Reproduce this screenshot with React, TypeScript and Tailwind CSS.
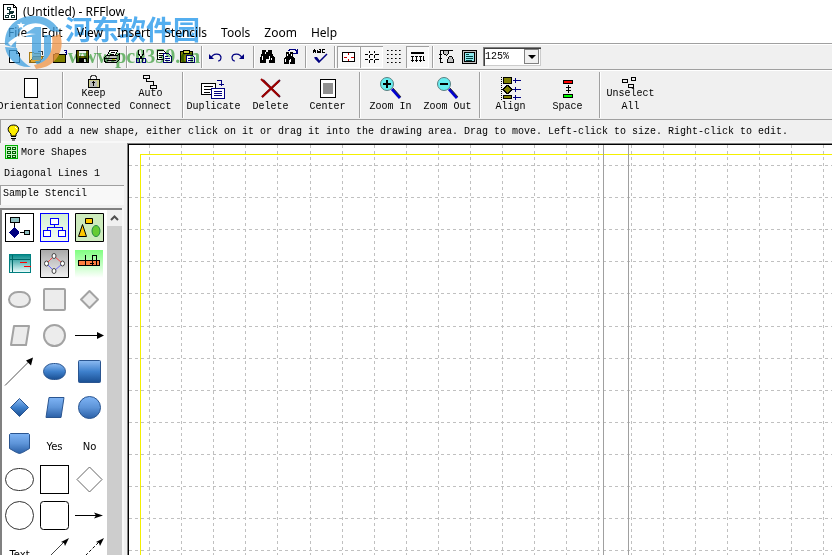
import React from "react";

type IconProps = { children: React.ReactNode; w?: number; h?: number; crisp?: boolean };

function Icon({ children, w = 23, h = 22, crisp = true }: IconProps) {
  return (
    <svg
      width={w}
      height={h}
      viewBox={`0 0 ${w} ${h}`}
      fill="none"
      stroke="#000"
      shapeRendering={crisp ? "crispEdges" : "auto"}
      className="block shrink-0"
      aria-hidden="true"
    >
      {children}
    </svg>
  );
}

function Sep({ tall = false }: { tall?: boolean }) {
  return (
    <div className="w-[6px] shrink-0 pl-[3px]">
      <div className={`w-[2px] border-l border-[#a0a0a0] bg-white ${tall ? "h-[46px]" : "h-[22px]"}`} />
    </div>
  );
}

function Tool({ label, pressed = false, children }: { label: string; pressed?: boolean; children: React.ReactNode }) {
  return (
    <button
      aria-label={label}
      aria-pressed={pressed}
      className={
        pressed
          ? "h-[22px] w-[23px] shrink-0 overflow-hidden bg-[#f8f8f8] shadow-[inset_1px_1px_0_#a0a0a0,inset_-1px_-1px_0_#fff]"
          : "h-[22px] w-[23px] shrink-0 overflow-hidden"
      }
    >
      <Icon>{children}</Icon>
    </button>
  );
}

function BigTool({ lines, children }: { lines: string[]; children: React.ReactNode }) {
  return (
    <button className="grid h-[46px] w-[57px] shrink-0 justify-center">
      <span className="col-start-1 row-start-1 flex justify-center">
        <Icon w={40} h={30}>
          {children}
        </Icon>
      </span>
      <span className="col-start-1 row-start-1 flex flex-col self-end pb-[5px] text-center whitespace-pre leading-[13px]">
        {lines.map((l) => (
          <span key={l}>{l}</span>
        ))}
      </span>
    </button>
  );
}

function Binoculars() {
  return (
    <>
      <path d="M8 5h3v2h1v-2h3v4l2 3v5h-5v-4h-1v4h-5v-5l2 -3z" fill="#000" stroke="none" />
      <path d="M7.500 12v3M12.500 12v3M9.500 7v2M13.500 7v2" stroke="#fff" />
    </>
  );
}

function StandardBar() {
  return (
    <div role="toolbar" aria-label="Standard" className="flex h-[26px] items-center border-t border-[#a0a0a0] pl-[2px] shadow-[inset_0_1px_0_#fff]">
      <Tool label="New">
        <path d="M7.500 4.500h7l3 3v9h-10zM14.500 4.500v3h3" fill="#fff" />
      </Tool>
      <Tool label="Open">
        <path d="M4.500 16.500v-10h4l1 1h6v3" fill="#ffe9a0" stroke="#a87b16" />
        <path d="M4.500 16.500l4-6h10l-4 6z" fill="#e3a72f" stroke="#8a6612" />
        <path d="M13 5.500h4v3" stroke="#333" />
      </Tool>
      <Tool label="Open folder">
        <path d="M5.500 16.500v-8h1l1-1h3l1 1h6v8z" fill="#808000" />
        <path d="M18.500 9v-4M16 4.500h3M17 6.500h1" stroke="#000080" />
      </Tool>
      <Tool label="Save">
        <path d="M5.500 4.500h12v12h-12z" fill="#606000" />
        <path d="M8 5h7v5h-7z" fill="#f0f0f0" stroke="none" />
        <path d="M8 12h8v5h-8z" fill="#000" stroke="none" />
        <path d="M13 13h2v3h-2z" fill="#ddd" stroke="none" />
      </Tool>
      <Sep />
      <Tool label="Print">
        <path d="M7.500 9.500l2-5h8l-2 5" fill="#fff" />
        <path d="M4.500 15.500v-4l2-2h11l2-2v6l-3 3h-10z" fill="#c0c0c0" />
        <path d="M5 12.500h12M7 14.500h9M11 6.500h4M10 8.500h4" />
        <path d="M12 13.500h3" stroke="#cc0" />
      </Tool>
      <Sep />
      <Tool label="Cut">
        <path d="M9.500 4v4l4 5M14.500 4v4l-4 5" />
        <path d="M7.500 12.500h3v4h-3zM13.500 12.500h3v4h-3z" stroke="#000080" />
      </Tool>
      <Tool label="Copy">
        <path d="M5.500 4.500h6l2 2v7h-8z" fill="#fff" />
        <path d="M7 7.500h4M7 9.500h4M7 11.500h3" />
        <path d="M11.500 7.500h5l3 3v6h-8z" fill="#fff" stroke="#000080" />
        <path d="M13 10.500h3M13 12.500h5M13 14.500h5" stroke="#000080" />
      </Tool>
      <Tool label="Paste">
        <path d="M5.500 5.500h12v11h-12z" fill="#808000" />
        <path d="M8.500 4.500h6v3h-6z" fill="#d8d840" />
        <path d="M11.500 9.500h6l2 2v5h-8z" fill="#fff" stroke="#000080" />
        <path d="M13 12.500h5M13 14.500h5" stroke="#000080" />
      </Tool>
      <Sep />
      <Tool label="Undo">
        <g shapeRendering="auto">
          <path d="M7 12c2-5 9-5 10-1c0 3-1 4-3 4" stroke="#000080" strokeWidth="1.200" />
          <path d="M5 8v5h5z" fill="#000080" stroke="none" />
        </g>
      </Tool>
      <Tool label="Redo">
        <g shapeRendering="auto">
          <path d="M15 12c-2-5-9-5-10-1c0 3 1 4 3 4" stroke="#000080" strokeWidth="1.200" />
          <path d="M17 8v5h-5z" fill="#000080" stroke="none" />
        </g>
      </Tool>
      <Sep />
      <Tool label="Find">
        <path d="M6 4h4v2h2v-2h4v3l3 5v5h-6v-4h-3v4h-6v-5l2-5z" fill="#000" stroke="none" />
        <path d="M6.500 10v4M13.500 10v4M9.500 6v2M15.500 12v2" stroke="#fff" />
      </Tool>
      <Tool label="Find next">
        <g transform="translate(-1 1)">
          <Binoculars />
        </g>
        <path d="M9.500 5l2-2h4l2 2v3M14 7.500h4M18.500 3v5" stroke="#000080" />
      </Tool>
      <Sep />
      <Tool label="Spelling">
        <path d="M5.500 7v-2l1-1l1 1v2M6 5.500h2M10.500 3.500h2v3h-3v-3M10 5.500h2M17 3.500h-2l-1 1v1l1 1h2" />
        <g shapeRendering="auto">
          <path d="M7 12l4 4l8-8" stroke="#000080" strokeWidth="1.500" />
          <path d="M6 11l3 0l3 4l-1 2z" fill="#000080" stroke="none" />
        </g>
      </Tool>
      <Sep />
      <Tool label="Page center" pressed>
        <path d="M5.500 6.500h12v9h-12z" fill="#fff" />
        <path d="M11.500 7v2M11.500 13v2M7 11.500h3M14 11.500h3" stroke="#d00000" />
      </Tool>
      <Tool label="Snap" pressed>
        <path d="M9.500 5v2M9.500 9v3M9.500 14v3M14.500 5v2M14.500 9v3M14.500 14v3M5 8.500h3M10 8.500h3M15 8.500h4M5 13.500h3M10 13.500h3M15 13.500h4" />
      </Tool>
      <Tool label="Dots">
        <path d="M4 4.500h15M4 8.500h15M4 12.500h15M4 16.500h15" strokeDasharray="1 3" />
        <path d="M5 4.500h15M5 8.500h15M5 12.500h15M5 16.500h15" strokeDasharray="1 3" stroke="#606060" />
      </Tool>
      <Tool label="Rulers" pressed>
        <path d="M5 7h13" strokeWidth="2" />
        <path d="M5 10.500h13M6.500 11v3M10.500 11v3M14.500 11v3M17.500 11v3M5 14.500h14" strokeDasharray="3 1" />
        <path d="M6.500 14v2M10.500 14v2M14.500 14v2" />
      </Tool>
      <Sep />
      <Tool label="Edit points">
        <path d="M18 4.500h-13v12h3M4 8.500h3M4 12.500h3" />
        <path d="M8.500 4.500h5v3l-2 2l-3-2z" fill="#c0c0c0" />
        <path d="M12.500 16.500v-3l2-3h2l2 3v3z" fill="#c0c0c0" />
      </Tool>
      <Tool label="Properties">
        <path d="M4.500 4.500h14v13h-14z" fill="#c0c0c0" />
        <path d="M6.500 6.500h10v9h-10z" fill="#8fe9ee" />
        <path d="M8 8.500h3M8 10.500h7M8 12.500h7M8 14.500h6" stroke="#004040" />
      </Tool>
      <div className="relative ml-[2px] h-[19px] w-[58px] shrink-0 bg-white shadow-[inset_1px_1px_0_#808080,inset_2px_2px_0_#404040,inset_-1px_-1px_0_#ccc]">
        <select aria-label="Zoom level" className="h-full w-full appearance-none bg-transparent pl-[2px] text-[10px] outline-none">
          <option>125%</option>
          <option>100%</option>
        </select>
        <div className="pointer-events-none absolute top-[2px] right-[2px] flex h-[15px] w-[15px] items-center justify-center border border-[#808080] bg-[#f0f0f0]">
          <div className="border-x-[4px] border-t-[4px] border-x-transparent border-t-black" />
        </div>
      </div>
    </div>
  );
}

function Lens({ plus = false }: { plus?: boolean }) {
  return (
    <g shapeRendering="auto">
      <path d="M22 17l8 9" stroke="#0000d0" strokeWidth="3" />
      <path d="M23 16l8 9" stroke="#333" />
      <circle cx="17" cy="12" r="6.500" fill="#66edf0" stroke="#5a7f80" />
      <path d={plus ? "M13 12h8M17 8v8" : "M13 12h8"} strokeWidth="2" />
    </g>
  );
}

function ActionBar() {
  return (
    <div role="toolbar" aria-label="Actions" className="flex h-[50px] items-center border-t border-[#a0a0a0] pl-[2px] shadow-[inset_0_1px_0_#fff]">
      <BigTool lines={["Orientation"]}>
        <path d="M13.500 6.500h13v19h-13z" fill="#fff" />
      </BigTool>
      <Sep tall />
      <BigTool lines={["Keep", "Connected"]}>
        <path d="M17.500 7v-2l2-2h2l2 2v2" stroke="#444" />
        <path d="M15.500 7.500h11v8h-11z" fill="#c9c98a" />
        <path d="M17 9h7v6h-7z" fill="#bbb" stroke="none" />
        <path d="M20.500 9v5M19 10.500h3" />
      </BigTool>
      <BigTool lines={["Auto", "Connect"]}>
        <path d="M13.500 3.500h6v3h-6zM16.500 7v2h7v4M20.500 13.500h6v3h-6z" />
      </BigTool>
      <Sep tall />
      <BigTool lines={["Duplicate"]}>
        <path d="M8.500 11.500h14v11h-14z" fill="#fff" />
        <path d="M11 14.500h9M11 17.500h7M11 20.500h6" />
        <path d="M18.500 16.500h13v10h-13z" fill="#fff" stroke="#000080" />
        <path d="M21 19.500h8M21 21.500h8M21 23.500h8M24 8.500h4v5M26 12.500h5" stroke="#000080" />
      </BigTool>
      <BigTool lines={["Delete"]}>
        <g shapeRendering="auto">
          <path d="M12 8l17 17M29 8l-18 17" stroke="#4b1232" strokeWidth="2" />
          <path d="M10 7l18 17M28 9l-17 16" stroke="#9d0000" strokeWidth="2" />
        </g>
      </BigTool>
      <BigTool lines={["Center"]}>
        <path d="M12.500 7.500h15v18h-15z" fill="#fff" />
        <path d="M15 11h10v11h-10z" fill="#909090" stroke="none" />
      </BigTool>
      <Sep tall />
      <BigTool lines={["Zoom In"]}>
        <Lens plus />
      </BigTool>
      <BigTool lines={["Zoom Out"]}>
        <Lens />
      </BigTool>
      <Sep tall />
      <BigTool lines={["Align"]}>
        <path d="M10.500 5v24" strokeDasharray="1 1" />
        <path d="M12.500 5.500h8v6h-8zM12.500 23.500h8v3h-8zM12 17.500l4-4h1l4 4l-4 4h-1z" fill="#808000" />
        <path d="M22 8.500h8M22 17.500h8M22 25.500h8M24.500 6v5M24.500 15v5M24.500 23v5" stroke="#000080" />
      </BigTool>
      <BigTool lines={["Space"]}>
        <path d="M15.500 8.500h9v3h-9z" fill="#f00" />
        <path d="M15.500 22.500h9v3h-9z" fill="#0f0" />
        <path d="M20.500 13v8M18 15.500h5M18 18.500h5" />
      </BigTool>
      <Sep tall />
      <BigTool lines={["Unselect", "All"]}>
        <path d="M12.500 7.500h5v3h-5zM18.500 12.500h5v3h-5zM21.500 5.500h4v3h-4z" />
      </BigTool>
    </div>
  );
}

function Arrow({ d, head, dash, stroke }: { d: string; head: string; dash?: string; stroke?: string }) {
  return (
    <>
      <path d={d} strokeDasharray={dash} stroke={stroke} />
      <path d={head} fill="#000" stroke="none" />
    </>
  );
}

const GREY = { fill: "#ececec", stroke: "#a3a3a3", strokeWidth: 2 };
const BLUE = { fill: "url(#blue)", stroke: "#2a5590", strokeWidth: 1 };
const SKY = { fill: "url(#sky)", stroke: "#2a5590", strokeWidth: 1 };

const shapes: { name: string; art: React.ReactNode }[] = [
  {
    name: "Flowchart",
    art: (
      <g shapeRendering="crispEdges">
        <path d="M3.500 3.500h28v28h-28z" fill="#fff" />
        <path d="M12.500 12v9M18 22.500h6" />
        <path d="M8.500 7.500h9v5h-9zM22.500 20.500h5v4h-5z" fill="#8fc0c0" />
        <path d="M12.500 17l5 5.500l-5 5.500l-5-5.500z" fill="#000080" stroke="none" />
      </g>
    ),
  },
  {
    name: "Organization chart",
    art: (
      <g shapeRendering="crispEdges">
        <path d="M3.500 3.500h28v28h-28z" fill="url(#mint)" stroke="#00f" />
        <path d="M13.500 8.500h8v6h-8zM6.500 20.500h7v6h-7zM21.500 20.500h7v6h-7z" fill="#fff" stroke="#00f" />
        <path d="M17.500 15v2M10.500 20v-3h15v3" stroke="#00f" />
      </g>
    ),
  },
  {
    name: "Basic shapes",
    art: (
      <>
        <path d="M3.500 3.500h28v28h-28z" fill="#cdebbd" />
        <path d="M13.500 8.500h7v5h-7zM10.500 14.500l4 12h-8z" fill="#ffc800" />
        <ellipse cx="24" cy="21" rx="4" ry="5.500" fill="#66cc33" stroke="#284" />
      </>
    ),
  },
  {
    name: "Chart",
    art: (
      <g shapeRendering="crispEdges">
        <path d="M7.500 8.500h21v18h-21z" fill="url(#teal)" stroke="#008080" />
        <path d="M8 13.500h20M10.500 9v17" stroke="#006868" />
        <path d="M18 16.500h7M22 20.500h7" stroke="#f00" />
      </g>
    ),
  },
  {
    name: "Network",
    art: (
      <>
        <path d="M3.500 3.500h28v28h-28z" fill="url(#ash)" />
        <path d="M10 17l7-7l8 7" stroke="#f44" />
        <path d="M10 18l7 7l8-7" stroke="#66f" />
        <g fill="#fff" stroke="#444">
          <ellipse cx="17" cy="10" rx="2" ry="2.500" />
          <ellipse cx="9.500" cy="17.500" rx="2" ry="2.500" />
          <ellipse cx="25.500" cy="17.500" rx="2" ry="2.500" />
          <ellipse cx="17" cy="25" rx="2" ry="2.500" />
        </g>
      </>
    ),
  },
  {
    name: "Timeline",
    art: (
      <g shapeRendering="crispEdges">
        <path d="M3 4h28v28h-28z" fill="url(#leaf)" stroke="none" />
        <path d="M6.500 14.500h21v5h-21z" fill="#ff7f40" />
        <path d="M13.500 9v11M20.500 20v-11h4v11M18 17.500h4" />
      </g>
    ),
  },
  { name: "Rounded oval", art: <rect x="7" y="10" width="21" height="15" rx="9" ry="7.500" {...GREY} /> },
  { name: "Square", art: <rect x="7" y="7" width="21" height="21" rx="1" {...GREY} /> },
  { name: "Diamond", art: <path d="M17.500 9l8.500 8.500l-8.500 8.500l-8.500-8.500z" strokeLinejoin="round" {...GREY} /> },
  { name: "Parallelogram", art: <path d="M12 8h15l-3 19h-15z" strokeLinejoin="round" {...GREY} /> },
  { name: "Circle", art: <circle cx="17.500" cy="17.500" r="10.500" {...GREY} /> },
  { name: "Arrow", art: <Arrow d="M3 17.500h23" head="M25 14l7 3.500l-7 3.500z" /> },
  { name: "Diagonal arrow", art: <Arrow d="M3 31.500l24-24" head="M31 3.500l-2 8l-5-5z" stroke="#555" /> },
  { name: "Blue oval", art: <rect x="6.500" y="9.500" width="22" height="16" rx="10" ry="8" {...BLUE} /> },
  { name: "Blue square", art: <rect x="6.500" y="6.500" width="22" height="22" rx="1" {...BLUE} /> },
  { name: "Blue diamond", art: <path d="M17.500 8.500l9 9l-9 9l-9-9z" strokeLinejoin="round" {...BLUE} /> },
  { name: "Blue parallelogram", art: <path d="M12 7.500h15l-3 20h-15z" {...SKY} /> },
  { name: "Blue circle", art: <circle cx="17.500" cy="17.500" r="11" {...SKY} /> },
  { name: "Shield", art: <path d="M7.500 8.500l1-1h18l1 1v14l-7 4l-3 1l-3-1l-7-4z" {...SKY} /> },
  { name: "Yes", art: "Yes" },
  { name: "No", art: "No" },
  { name: "Terminator", art: <rect x="3.500" y="6.500" width="28" height="22" rx="13" ry="11" stroke="#333" /> },
  { name: "Process", art: <rect x="3.500" y="3.500" width="28" height="28" /> },
  { name: "Decision", art: <path d="M17.500 5l12.500 12.500l-12.500 12.500l-12.500-12.500z" stroke="#666" /> },
  { name: "Connector", art: <circle cx="17.500" cy="17.500" r="14" stroke="#333" /> },
  { name: "Rounded process", art: <rect x="3.500" y="3.500" width="28" height="28" rx="3" /> },
  { name: "Thin arrow", art: <Arrow d="M3 17.500h26" head="M22 14.500l9 3l-9 3l2-3z" /> },
  { name: "Text", art: "Text" },
  { name: "Line arrow", art: <Arrow d="M3 32l25-25" head="M32 4l-4 8l-1-3l-3-1z" stroke="#444" /> },
  { name: "Dashed arrow", art: <Arrow d="M3 32l25-25" head="M32 4l-4 8l-1-3l-3-1z" dash="3 2" /> },
];

function Gradient({ id, stops }: { id: string; stops: string[] }) {
  return (
    <linearGradient id={id} x1="0" y1="0" x2="0" y2="1">
      {stops.map((c, i) => (
        <stop key={i} offset={i / (stops.length - 1)} stopColor={c} />
      ))}
    </linearGradient>
  );
}

function Palette() {
  return (
    <div className="flex min-h-0 flex-1 border-t-2 border-l-2 border-[#808080]">
      <svg width="0" height="0" className="absolute" aria-hidden="true">
        <defs>
          <Gradient id="blue" stops={["#8dbbf2", "#3e80cc", "#1a4f92"]} />
          <Gradient id="sky" stops={["#7fb4f5", "#5d94d8", "#2a5fa6"]} />
          <Gradient id="mint" stops={["#d2efd2", "#f4fcf4"]} />
          <Gradient id="teal" stops={["#008888", "#f0ffff"]} />
          <Gradient id="ash" stops={["#a8a8a8", "#f0f0f0"]} />
          <Gradient id="leaf" stops={["#80ff80", "#ffffff"]} />
        </defs>
      </svg>
      <div className="grid w-[105px] shrink-0 auto-rows-[36px] grid-cols-3 overflow-hidden bg-white">
        {shapes.map((s) => (
          <button key={s.name} aria-label={s.name} className="flex h-[36px] items-start justify-center">
            {typeof s.art === "string" ? (
              <span className="pt-[14px] font-['DejaVu_Sans',sans-serif] text-[10px] leading-[14px]">{s.art}</span>
            ) : (
              <Icon w={35} h={36} crisp={false}>
                {s.art}
              </Icon>
            )}
          </button>
        ))}
      </div>
      <div className="w-[15px] shrink-0 bg-[#cdcdcd]">
        <button aria-label="Scroll up" className="flex h-[16px] w-full items-center justify-center bg-[#f0f0f0]">
          <Icon w={9} h={6} crisp={false}>
            <path d="M1 5l3.500-3.500l3.500 3.500" stroke="#505050" strokeWidth="2" />
          </Icon>
        </button>
      </div>
    </div>
  );
}

function DrawingArea() {
  const lines = Array.from({ length: 80 }, (_, i) => Math.round(i * 32.1) + 20);
  return (
    <main className="flex min-w-0 flex-1 overflow-hidden border-t border-l border-[#808080] bg-white">
      <div className="min-w-0 flex-1 border-t border-l border-black">
        <svg className="block h-full w-full" shapeRendering="crispEdges" fill="none" aria-label="Drawing area">
          <g stroke="#c0c0c0" strokeDasharray="3 3">
            {lines.map((n) => (
              <React.Fragment key={n}>
                <path d={`M${n}.500 0V2600`} />
                <path d={`M0 ${n}.500H3000`} />
              </React.Fragment>
            ))}
          </g>
          <rect x="11" y="9" width="1" height="2600" fill="#f4f000" />
          <rect x="11" y="9" width="3000" height="1" fill="#f4f000" />
          <path d="M474.500 0V2600M499.500 0V2600" stroke="#a0a0a0" />
        </svg>
      </div>
    </main>
  );
}

function Watermark() {
  return (
    <div className="pointer-events-none absolute top-[12px] left-[4px] flex">
      <svg width="60" height="58" viewBox="0 0 60 58" className="shrink-0 opacity-75" aria-hidden="true">
        <path d="M1 33C0 14 14 3 31 4c12 0 21 7 25 16l-9-1C40 8 20 8 14 23c-2 4-2 8-2 13z" fill="#3d9fe0" />
        <path d="M22 21l9-6h6v33h-9V25h-6zM40 23h7v21c0 6-8 9-14 9l-2-4c5 0 9-2 9-6z" fill="#3d9fe0" />
        <path d="M1 35l12 1c1 9 6 15 14 19C13 56 3 47 1 35z" fill="#3d9fe0" />
        <path d="M56 22c6 17-5 34-24 35l-2-4c13-2 20-12 18-28z" fill="#ef9446" />
        <path d="M4 31c8-8 17-11 28-9c-11 1-19 5-25 12z" fill="#fff" />
        <path d="M17 10l1 2h3l-2 2l1 3l-3-2l-3 2l1-3l-2-2h3z" fill="#fff" />
      </svg>
      <div className="flex flex-col pt-[1px] pl-[1px] whitespace-nowrap mix-blend-multiply">
        <span className="font-['Noto_Sans_CJK_SC',sans-serif] text-[27px] leading-[32px] font-bold text-[#36a0ec]/85">河东软件园</span>
        <span className="pl-[3px] font-['Liberation_Serif',serif] text-[20px] leading-[22px] font-bold text-[#3aa63a]/70">www.pc0359.cn</span>
      </div>
    </div>
  );
}

export default function App() {
  return (
    <div className="relative flex h-screen flex-col overflow-hidden bg-[#f0f0f0] font-['Liberation_Mono','Noto_Sans_CJK_SC',monospace] text-[10px] text-black">
      <header className="h-[43px] shrink-0 bg-white font-['Noto_Sans',sans-serif]">
        <div className="flex h-[24px] items-center gap-[5px] pl-[3px] text-[12px]">
          <Icon w={15} h={18}>
            <path d="M.500 1.500h10l3 3v12h-13zM10.500 1.500v3h3" fill="#fff" />
            <path d="M4.500 4.500h3v2h-3zM2.500 12.500h3v2h-3zM8.500 12.500h3v2h-3zM6.500 8.500h4v1h-4zM4 10.500h6M6.500 7v5" stroke="#133" />
          </Icon>
          <h1>(Untitled) - RFFlow</h1>
        </div>
        <nav className="flex h-[18px] items-center gap-[14px] pl-[8px] text-[12px] leading-[18px]">
          {["File", "Edit", "View", "Insert", "Stencils", "Tools", "Zoom", "Help"].map((m) => (
            <button key={m}>{m}</button>
          ))}
        </nav>
      </header>
      <div className="flex shrink-0 flex-col overflow-hidden">
        <StandardBar />
        <ActionBar />
        <div className="flex h-[24px] items-center gap-[6px] border-t border-l border-[#a0a0a0] pl-[6px] shadow-[inset_0_-2px_0_#f8f8f8]">
          <Icon w={13} h={18} crisp={false}>
            <path d="M4 11c-5-4-3-9 2.500-9s7 5 2.500 9v2h-5z" fill="#ffee00" />
            <path d="M4 13.500h5M4 15.500h5M5 17h3" />
            <path d="M8 4l2 2" stroke="#fff" />
          </Icon>
          <p className="whitespace-nowrap">
            To add a new shape, either click on it or drag it into the drawing area. Drag to move. Left-click to size. Right-click to edit.
          </p>
        </div>
      </div>
      <div className="flex min-h-0 flex-1">
        <aside className="flex w-[127px] shrink-0 flex-col">
          <button className="flex h-[18px] items-center gap-[2px] pl-[5px]">
            <Icon w={14} h={16}>
              <path d="M.500 1.500h12v13h-12z" fill="#c8f7c8" stroke="#00b000" />
              <path d="M2.500 3.500h3v2h-3zM7.500 3.500h3v2h-3zM2.500 7.500h3v2h-3zM7.500 7.500h3v2h-3zM2.500 11.500h3v2h-3zM7.500 11.500h3v2h-3z" stroke="#006000" />
            </Icon>
            More Shapes
          </button>
          <div className="flex h-[24px] items-center pl-[4px]">Diagonal Lines 1</div>
          <div className="mr-[3px] flex h-[20px] items-center border-t border-l border-[#a0a0a0] border-r-white bg-[#f8f8f8] pb-[4px] pl-[2px]">Sample Stencil</div>
          <div className="mt-[3px] mr-[3px] flex min-h-0 flex-1 flex-col border-r-2 border-[#f8f8f8]">
            <Palette />
          </div>
        </aside>
        <DrawingArea />
      </div>
      <Watermark />
    </div>
  );
}
